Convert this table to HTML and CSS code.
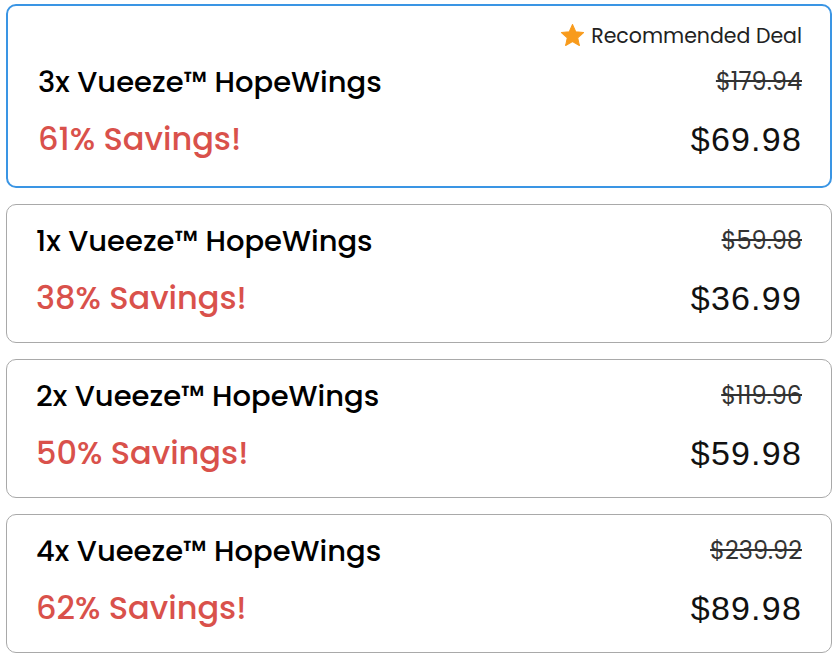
FILE: index.html
```html
<!DOCTYPE html>
<html>
<head>
<meta charset="utf-8">
<link rel="stylesheet" href="styles.css">
</head>
<body>
<div class="list">
  <div class="card card--active">
    <div class="badge">
      <svg class="star" viewBox="0 0 24 24" width="25" height="25"><path d="M12 1.5l3.1 6.9 7.5.8-5.6 5 1.6 7.4L12 17.8l-6.6 3.8 1.6-7.4-5.6-5 7.5-.8z" fill="#f89b1c" stroke="#f89b1c" stroke-width="1" stroke-linejoin="round"/></svg>
      <span>Recommended Deal</span>
    </div>
    <div class="row">
      <div class="name">3x Vueeze™ HopeWings</div>
      <div class="old">$179.94</div>
    </div>
    <div class="row">
      <div class="save">61% Savings!</div>
      <div class="price">$69.98</div>
    </div>
  </div>
  <div class="card">
    <div class="row">
      <div class="name">1x Vueeze™ HopeWings</div>
      <div class="old">$59.98</div>
    </div>
    <div class="row">
      <div class="save">38% Savings!</div>
      <div class="price">$36.99</div>
    </div>
  </div>
  <div class="card">
    <div class="row">
      <div class="name">2x Vueeze™ HopeWings</div>
      <div class="old">$119.96</div>
    </div>
    <div class="row">
      <div class="save">50% Savings!</div>
      <div class="price">$59.98</div>
    </div>
  </div>
  <div class="card">
    <div class="row">
      <div class="name">4x Vueeze™ HopeWings</div>
      <div class="old">$239.92</div>
    </div>
    <div class="row">
      <div class="save">62% Savings!</div>
      <div class="price">$89.98</div>
    </div>
  </div>
</div>
</body>
</html>
```

FILE: styles.css
```css
html, body {
  margin: 0;
  padding: 0;
  background: #fff;
}
body {
  padding: 4px 5px 0 6px;
  font-family: "Poppins", "Open Sans", "Liberation Sans", sans-serif;
  color: #111;
}
.list {
  display: flex;
  flex-direction: column;
  gap: 16px;
}
.card {
  border: 1px solid #a9a9a9;
  border-radius: 10px;
  padding: 15px 29px 22px 29px;
  display: flex;
  flex-direction: column;
  gap: 14px;
}
.card--active {
  border: 2px solid #3a95e4;
  padding: 18px 28px 25px 30px;
}
.badge {
  display: flex;
  justify-content: flex-end;
  align-items: center;
  gap: 6px;
  font-size: 20.5px;
  line-height: 24px;
  color: #222;
  margin-bottom: -1px;
}
.star {
  display: block;
  margin-top: -2px;
}
.row {
  display: flex;
  justify-content: space-between;
  align-items: center;
}
.name {
  font-size: 29px;
  font-weight: 500;
  line-height: 42px;
  color: #000;
}
.save {
  font-size: 32px;
  font-weight: 500;
  line-height: 44px;
  color: #d9514b;
}
.old {
  font-size: 24px;
  line-height: 30px;
  color: #333;
  text-decoration: line-through;
}
.price {
  font-family: "Liberation Sans", Arial, sans-serif;
  font-size: 34px;
  line-height: 44px;
  letter-spacing: 1.2px;
  color: #111;
}
```
